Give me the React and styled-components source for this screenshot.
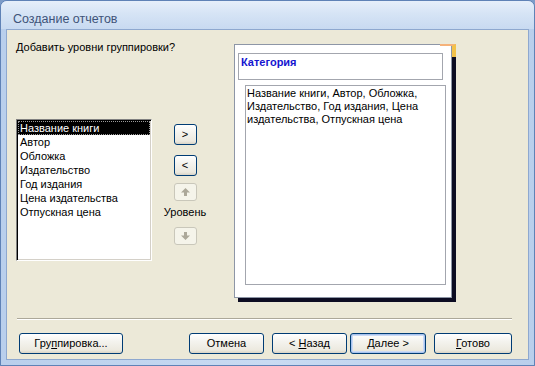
import styled, { createGlobalStyle } from "styled-components"

const Global = createGlobalStyle`
  html, body {
    margin: 0;
    padding: 0;
    background: #7d9cc8;
  }
  body {
    font-family: "Liberation Sans", Arial, sans-serif;
    font-size: 11px;
    color: #000;
  }
`

const Window = styled.div`
  width: 535px;
  height: 366px;
  box-sizing: border-box;
  display: flex;
  flex-direction: column;
  background: linear-gradient(to right, #b9cfec, #c9dbf2 50%, #b9cfec);
  border: 1px solid #5f82b6;
  border-radius: 7px 7px 0 0;
`

const TitleBar = styled.div`
  height: 28px;
  box-sizing: border-box;
  padding: 10px 0 0 12px;
  font-size: 12.5px;
  line-height: 16px;
  color: #3e5379;
  background: linear-gradient(#e6effa, #d6e4f5 45%, #c8daf1);
  border-radius: 6px 6px 0 0;
  white-space: nowrap;
`

const Content = styled.div`
  flex: 1;
  margin: 0 5px 5px;
  background: #ece9d8;
  border: 1px solid #8ea8cf;
  display: flex;
  flex-direction: column;
`

const Main = styled.div`
  height: 288px;
  display: flex;
  align-items: flex-start;
  padding-left: 9px;
`

const LeftCol = styled.div`
  width: 136px;
  display: flex;
  flex-direction: column;
`

const Question = styled.div`
  margin-top: 10px;
  line-height: 14px;
  white-space: nowrap;
`

const ListBox = styled.div`
  margin-top: 65px;
  height: 142px;
  box-sizing: border-box;
  background: #fff;
  border: 1px solid;
  border-color: #808080 #fff #fff #808080;
  box-shadow: inset 1px 1px 0 #000, inset -1px -1px 0 #d4d0c8;
  padding: 1px;
`

const ListItem = styled.div`
  height: 14px;
  line-height: 14px;
  padding-left: 2px;
  white-space: nowrap;
  background: ${p => (p.selected ? "#000" : "transparent")};
  color: ${p => (p.selected ? "#fff" : "#000")};
  outline: ${p => (p.selected ? "1px dotted #9a9a9a" : "none")};
  outline-offset: -1px;
`

const MidCol = styled.div`
  width: 44px;
  margin-left: 11px;
  padding-top: 94px;
  display: flex;
  flex-direction: column;
  align-items: center;
`

const XpButton = styled.div`
  box-sizing: border-box;
  width: ${p => p.w || 75}px;
  height: ${p => p.h || 21}px;
  margin-top: ${p => p.mt || 0}px;
  margin-left: ${p => p.ml || 0}px;
  display: flex;
  align-items: center;
  justify-content: center;
  border: 1px solid ${p => (p.disabled ? "#c9c7ba" : "#003c74")};
  border-radius: 3px;
  background: ${p =>
    p.disabled
      ? "#f5f4ea"
      : "linear-gradient(#ffffff, #f4f3ee 40%, #ece9df 85%, #d8d3c6)"};
  box-shadow: ${p =>
    p.isDefault ? "inset 0 0 0 1px #a8c3ee, inset 0 0 0 2px #cbdaf5" : "none"};
  color: ${p => (p.disabled ? "#aca899" : "#000")};
  white-space: pre;
  line-height: 13px;
`

const Level = styled.div`
  margin-top: 4px;
  line-height: 14px;
  white-space: nowrap;
`

const Preview = styled.div`
  position: relative;
  margin: 14px 0 0 27px;
  width: 218px;
  height: 254px;
  box-sizing: border-box;
  background: #fff;
  border: 1px solid #8d96a6;
  box-shadow: 4px 4px 0 #0c0c22;
  padding: 8px 0 0 3px;
`

const Corner = styled.div`
  position: absolute;
  top: -1px;
  right: -5px;
  width: 16px;
  height: 13px;
  border-top: 2px solid #f5b27a;
  border-right: 4px solid #f2c24a;
  box-sizing: border-box;
`

const CategoryBox = styled.div`
  width: 205px;
  height: 27px;
  box-sizing: border-box;
  border: 1px solid #a3a6ae;
  padding: 1px 0 0 2px;
  line-height: 14px;
  font-weight: bold;
  color: #1515d0;
`

const DetailBox = styled.div`
  margin: 5px 0 0 7px;
  width: 201px;
  height: 200px;
  box-sizing: border-box;
  border: 1px solid #a3a6ae;
  padding: 1px 0 0 1px;
  line-height: 13px;
  white-space: nowrap;
`

const Separator = styled.div`
  margin: 0 16px 0 10px;
  height: 0;
  border-top: 1px solid #aca899;
  border-bottom: 1px solid #fff;
`

const ButtonRow = styled.div`
  display: flex;
  margin-top: 13px;
  padding: 0 16px 0 12px;
`

const Spacer = styled.div`
  flex: 1;
`

const Key = styled.span`
  text-decoration: underline;
`

function Arrow({ down }) {
  return (
    <svg width="9" height="8" viewBox="0 0 9 8">
      <polygon
        points={down ? "4.5,8 9,3.5 6,3.5 6,0 3,0 3,3.5 0,3.5" : "4.5,0 9,4.5 6,4.5 6,8 3,8 3,4.5 0,4.5"}
        fill="#aca899"
      />
    </svg>
  )
}

const fields = [
  "Название книги",
  "Автор",
  "Обложка",
  "Издательство",
  "Год издания",
  "Цена издательства",
  "Отпускная цена",
]

export default function App() {
  return (
    <>
      <Global />
      <Window>
        <TitleBar>Создание отчетов</TitleBar>
        <Content>
          <Main>
            <LeftCol>
              <Question>Добавить уровни группировки?</Question>
              <ListBox>
                {fields.map((f, i) => (
                  <ListItem key={f} selected={i === 0}>{f}</ListItem>
                ))}
              </ListBox>
            </LeftCol>
            <MidCol>
              <XpButton w={23}>&gt;</XpButton>
              <XpButton w={23} mt={10}>&lt;</XpButton>
              <XpButton w={23} h={18} mt={7} disabled><Arrow /></XpButton>
              <Level>Уровень</Level>
              <XpButton w={23} h={18} mt={8} disabled><Arrow down /></XpButton>
            </MidCol>
            <Preview>
              <Corner />
              <CategoryBox>Категория</CategoryBox>
              <DetailBox>
                Название книги, Автор, Обложка,<br />
                Издательство, Год издания, Цена<br />
                издательства, Отпускная цена
              </DetailBox>
            </Preview>
          </Main>
          <Separator />
          <ButtonRow>
            <XpButton w={104}><span>Гру<Key>п</Key>пировка...</span></XpButton>
            <Spacer />
            <XpButton w={75}><span>Отмена</span></XpButton>
            <XpButton w={75} ml={8}><span>{"< "}<Key>Н</Key>азад</span></XpButton>
            <XpButton w={76} ml={3} isDefault><span><Key>Д</Key>{"алее >"}</span></XpButton>
            <XpButton w={78} ml={8}><span><Key>Г</Key>отово</span></XpButton>
          </ButtonRow>
        </Content>
      </Window>
    </>
  )
}
